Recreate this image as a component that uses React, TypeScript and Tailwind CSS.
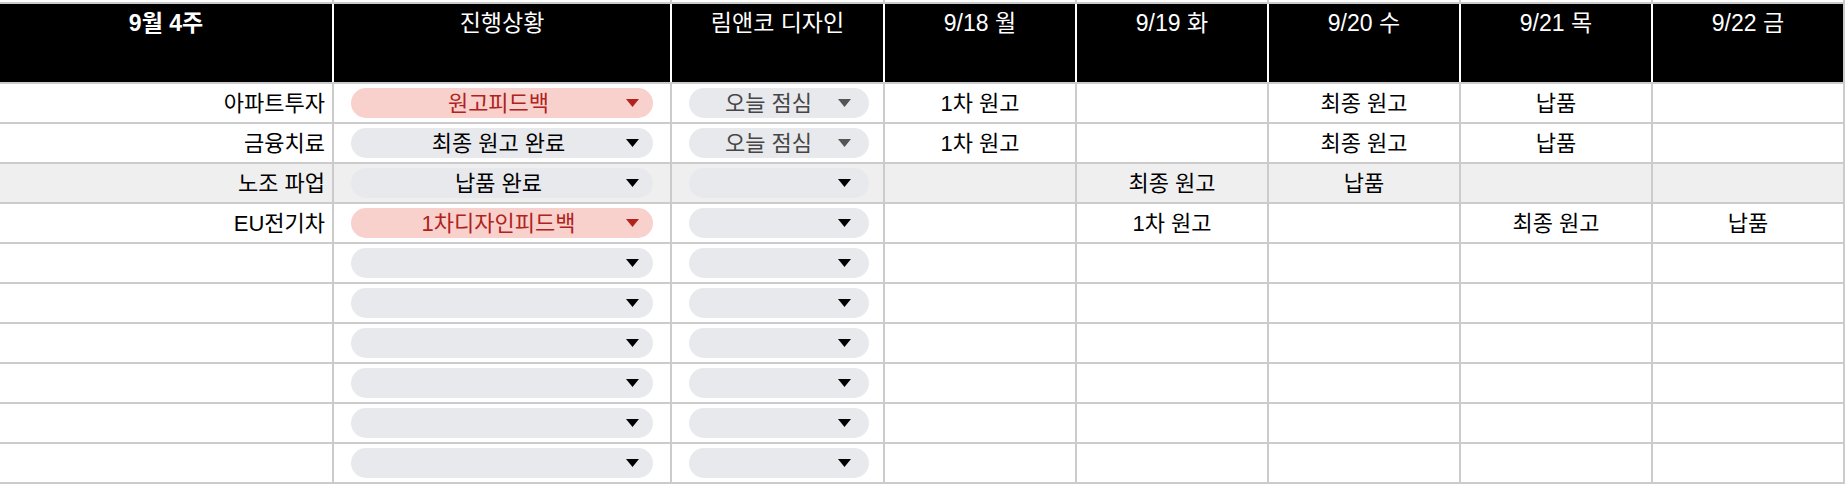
type Tone = 'red' | 'gray' | 'muted';

type Row = {
  name: string;
  status?: { label: string; tone: Tone };
  design?: { label: string; tone: Tone };
  days: string[];
  shaded?: boolean;
};

const gridCols =
  'grid grid-cols-[332px_336px_211px_190px_190px_190px_190px_190px] gap-x-[2px]';

const headers = ['9월 4주', '진행상황', '림앤코 디자인', '9/18 월', '9/19 화', '9/20 수', '9/21 목', '9/22 금'];

const rows: Row[] = [
  {
    name: '아파트투자',
    status: { label: '원고피드백', tone: 'red' },
    design: { label: '오늘 점심', tone: 'muted' },
    days: ['1차 원고', '', '최종 원고', '납품', ''],
  },
  {
    name: '금융치료',
    status: { label: '최종 원고 완료', tone: 'gray' },
    design: { label: '오늘 점심', tone: 'muted' },
    days: ['1차 원고', '', '최종 원고', '납품', ''],
  },
  {
    name: '노조 파업',
    status: { label: '납품 완료', tone: 'gray' },
    days: ['', '최종 원고', '납품', '', ''],
    shaded: true,
  },
  {
    name: 'EU전기차',
    status: { label: '1차디자인피드백', tone: 'red' },
    days: ['', '1차 원고', '', '최종 원고', '납품'],
  },
  ...Array.from({ length: 6 }, () => ({ name: '', days: ['', '', '', '', ''] })),
];

const toneStyles: Record<Tone, { chip: string; text: string; arrow: string }> = {
  red: { chip: 'bg-[#f8d1cd]', text: 'text-[#b1221c]', arrow: 'fill-[#b1221c]' },
  gray: { chip: 'bg-[#e8e9ec]', text: 'text-black', arrow: 'fill-black' },
  muted: { chip: 'bg-[#e8e9ec]', text: 'text-[#464646]', arrow: 'fill-[#555555]' },
};

const Arrow = ({ className }: { className: string }) => (
  <svg width="13" height="8" viewBox="0 0 13 8" className={`shrink-0 ${className}`}>
    <path d="M0 0 H13 L6.5 8 Z" />
  </svg>
);

const Chip = ({
  value,
  wide,
}: {
  value?: { label: string; tone: Tone };
  wide?: boolean;
}) => {
  const tone = toneStyles[value?.tone ?? 'gray'];
  return (
    <div
      className={`flex items-center h-[30px] rounded-full ${tone.chip} ${
        wide ? 'mx-[17px] pl-[20px] pr-[14px]' : 'ml-[17px] mr-[14px] pl-[10px] pr-[18px]'
      }`}
    >
      <span className={`flex-1 text-center whitespace-nowrap ${tone.text}`}>{value?.label ?? ''}</span>
      <Arrow className={tone.arrow} />
    </div>
  );
};

export default function App() {
  return (
    <div className="w-[1846px] h-[484px] bg-white font-['Liberation_Sans','Noto_Sans_CJK_KR',sans-serif] text-[22px] text-black">
      <div className="w-fit bg-[#cbcbcb] flex flex-col gap-y-[2px] pr-[2px] pb-[2px]">
        {/* sliver of the row above */}
        <div className={`${gridCols} h-[2px]`}>
          {headers.map((h) => (
            <div key={h} className="bg-white" />
          ))}
        </div>

        <div className={`${gridCols} h-[78px] bg-white`}>
          {headers.map((h, i) => (
            <div
              key={h}
              className={`bg-black text-white text-center text-[23px] pt-[5px] leading-[29px] ${
                i === 0 ? 'font-bold' : ''
              }`}
            >
              {h}
            </div>
          ))}
        </div>

        {rows.map((row, r) => {
          const bg = row.shaded ? 'bg-[#efefef]' : 'bg-white';
          return (
            <div key={r} className={`${gridCols} h-[38px]`}>
              <div className={`${bg} flex items-center justify-end pr-[7px]`}>{row.name}</div>
              <div className={`${bg} flex flex-col justify-center`}>
                <Chip value={row.status} wide />
              </div>
              <div className={`${bg} flex flex-col justify-center`}>
                <Chip value={row.design} />
              </div>
              {row.days.map((d, i) => (
                <div key={i} className={`${bg} flex items-center justify-center`}>
                  {d}
                </div>
              ))}
            </div>
          );
        })}
      </div>
    </div>
  );
}
